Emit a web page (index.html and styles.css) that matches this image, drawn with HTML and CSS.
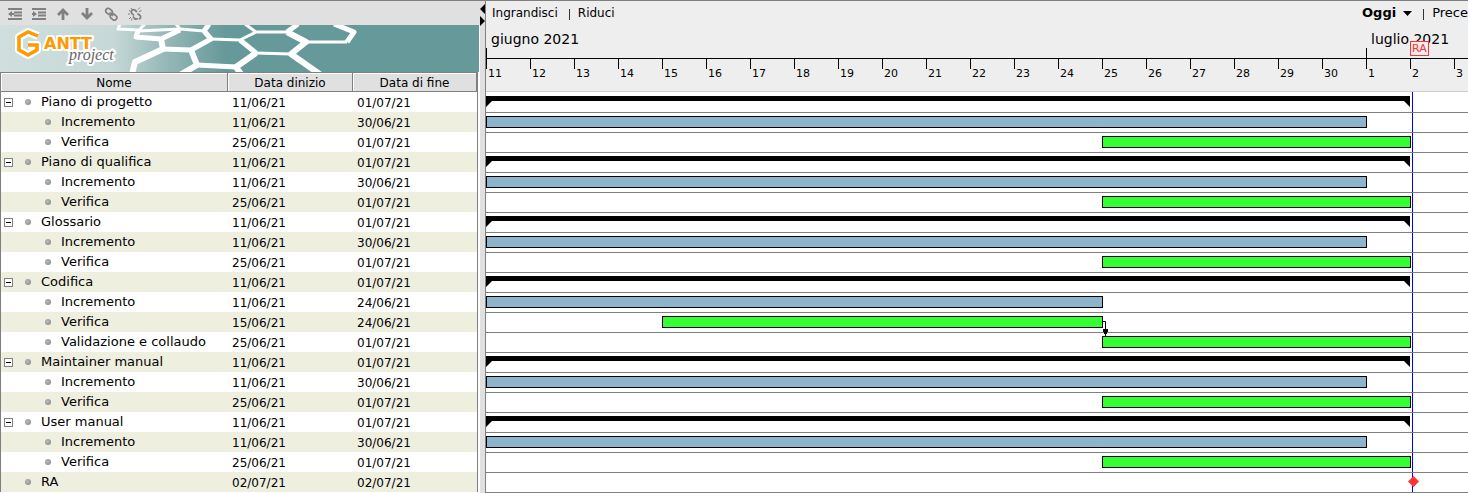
FILE: index.html
```html
<!DOCTYPE html>
<html lang="it">
<head>
<meta charset="utf-8">
<title>GanttProject</title>
<link rel="stylesheet" href="styles.css">
</head>
<body>
<div class="app">
  <section class="tasks">
    <div class="toolbar">
      <button class="tool" aria-label="Riduci rientro"><svg width="14" height="12" viewBox="0 0 14 12"><path d="M0 1h14M6 4.500h8M6 7.500h8M0 11h14" stroke="#808080" stroke-width="2"/><path d="M0 6l4-3v2h2v2H4v2z" fill="#808080"/></svg></button>
      <button class="tool" aria-label="Aumenta rientro"><svg width="14" height="12" viewBox="0 0 14 12"><path d="M0 1h14M6 4.500h8M6 7.500h8M0 11h14" stroke="#808080" stroke-width="2"/><path d="M5 6L1 3v2H0v2h1v2z" fill="#808080"/></svg></button>
      <button class="tool" aria-label="Sposta su"><svg width="14" height="12" viewBox="0 0 14 12"><path d="M7 12V2M2 7l5-5 5 5" fill="none" stroke="#808080" stroke-width="2.800"/></svg></button>
      <button class="tool" aria-label="Sposta giù"><svg width="14" height="12" viewBox="0 0 14 12"><path d="M7 0v10M2 5l5 5 5-5" fill="none" stroke="#808080" stroke-width="2.800"/></svg></button>
      <button class="tool" aria-label="Collega"><svg width="14" height="14" viewBox="0 0 14 14"><g fill="none" stroke="#808080" stroke-width="1.700"><rect x="1.500" y="2" width="7" height="5" rx="2.300" transform="rotate(40 5 4.500)"/><rect x="6" y="7.400" width="7" height="5" rx="2.300" transform="rotate(40 9.500 10)"/><path d="M5.500 5.500l3.500 3.500"/></g></svg></button>
      <button class="tool" aria-label="Scollega"><svg width="14" height="14" viewBox="0 0 14 14"><g fill="none" stroke="#808080" stroke-width="1.700"><path d="M6 8.500L3.800 6.400a2.300 2.300 0 0 1 3-3.400L9 5"/><path d="M5 9.500l1.500 2a2.400 2.400 0 0 0 3.500-.3"/><path d="M9.500 6.500l2.500 2a2 2 0 0 1-1 3.500"/></g><path d="M3 1l1 1.500M1 3.500l1.500.5M0 7h2M10 2.500L12 .5M11 4.500l2.500-.8M1 12l2-2M3.500 13.500l.6-2" stroke="#808080"/></svg></button>
    </div>
    <div class="banner">
      <svg class="banner-art" width="479" height="47" viewBox="0 0 479 47" role="img" aria-label="GanttProject">
        <defs><linearGradient id="sea" gradientUnits="userSpaceOnUse" x1="0" y1="0" x2="225" y2="0"><stop offset="0" stop-color="#d0dfdd"/><stop offset=".5" stop-color="#c6d8d7"/><stop offset=".75" stop-color="#93b7b6"/><stop offset="1" stop-color="#669999"/></linearGradient></defs>
        <rect width="479" height="47" fill="url(#sea)"/>
        <g fill="none" stroke="#fff" stroke-linejoin="round">
          <path stroke-width="3" d="M120-1l-2 5 20 1M138 6l42-2-4-5M180 4l24 2M211 14l29 1M256 7h31M306 17h41M256 28l35 1M240 15l16-8-11-8M145-1l-7 7"/>
          <path stroke-width="5" d="M138 6l-2 6 25 2 19-9M204 6l5-7M162 24l29 1 20-11-7-8M197 40l39 2M287 7l11-8M347 17l7-10-20-8M240 15l16 13"/>
          <path stroke-width="6" d="M161 14l2 10-28 13-3 12M191 25l6 15-17 10M287 7l19 10-15 12 30 21M256 28l-20 14 5 7"/>
        </g>
        <g stroke-linejoin="round">
          <path d="M38 11l-10-4-9 5v13l9 5 9-5v-5h-9" fill="none" stroke="#fff" stroke-width="8"/>
          <text class="logo-name" x="44" y="24">ANTT</text>
          <path d="M38 11l-10-4-9 5v13l9 5 9-5v-5h-9" fill="none" stroke="#f90" stroke-width="3.500" stroke-linejoin="miter"/>
          <text class="logo-sub" x="69" y="35">project</text>
        </g>
      </svg>
    </div>
    <table class="grid">
      <colgroup><col class="c-name"><col class="c-start"><col class="c-end"></colgroup>
      <thead><tr><th>Nome</th><th>Data dinizio</th><th>Data di fine</th></tr></thead>
      <tbody>
        <tr><td><div class="name"><button class="toggle" aria-label="Comprimi"></button>Piano di progetto</div></td><td>11/06/21</td><td>01/07/21</td></tr>
        <tr><td><div class="name sub">Incremento</div></td><td>11/06/21</td><td>30/06/21</td></tr>
        <tr><td><div class="name sub">Verifica</div></td><td>25/06/21</td><td>01/07/21</td></tr>
        <tr><td><div class="name"><button class="toggle" aria-label="Comprimi"></button>Piano di qualifica</div></td><td>11/06/21</td><td>01/07/21</td></tr>
        <tr><td><div class="name sub">Incremento</div></td><td>11/06/21</td><td>30/06/21</td></tr>
        <tr><td><div class="name sub">Verifica</div></td><td>25/06/21</td><td>01/07/21</td></tr>
        <tr><td><div class="name"><button class="toggle" aria-label="Comprimi"></button>Glossario</div></td><td>11/06/21</td><td>01/07/21</td></tr>
        <tr><td><div class="name sub">Incremento</div></td><td>11/06/21</td><td>30/06/21</td></tr>
        <tr><td><div class="name sub">Verifica</div></td><td>25/06/21</td><td>01/07/21</td></tr>
        <tr><td><div class="name"><button class="toggle" aria-label="Comprimi"></button>Codifica</div></td><td>11/06/21</td><td>01/07/21</td></tr>
        <tr><td><div class="name sub">Incremento</div></td><td>11/06/21</td><td>24/06/21</td></tr>
        <tr><td><div class="name sub">Verifica</div></td><td>15/06/21</td><td>24/06/21</td></tr>
        <tr><td><div class="name sub">Validazione e collaudo</div></td><td>25/06/21</td><td>01/07/21</td></tr>
        <tr><td><div class="name"><button class="toggle" aria-label="Comprimi"></button>Maintainer manual</div></td><td>11/06/21</td><td>01/07/21</td></tr>
        <tr><td><div class="name sub">Incremento</div></td><td>11/06/21</td><td>30/06/21</td></tr>
        <tr><td><div class="name sub">Verifica</div></td><td>25/06/21</td><td>01/07/21</td></tr>
        <tr><td><div class="name"><button class="toggle" aria-label="Comprimi"></button>User manual</div></td><td>11/06/21</td><td>01/07/21</td></tr>
        <tr><td><div class="name sub">Incremento</div></td><td>11/06/21</td><td>30/06/21</td></tr>
        <tr><td><div class="name sub">Verifica</div></td><td>25/06/21</td><td>01/07/21</td></tr>
        <tr><td><div class="name leaf">RA</div></td><td>02/07/21</td><td>02/07/21</td></tr>
      </tbody>
    </table>
  </section>
  <div class="splitter">
    <svg width="5" height="22" viewBox="0 0 5 22"><path d="M5 0v10L0 5zM0 12v10l5-5z"/></svg>
  </div>
  <section class="chart">
    <div class="chart-bar">
      <button class="link">Ingrandisci</button><span class="sep"></span><button class="link">Riduci</button>
      <div class="nav">
        <button class="link today">Oggi<svg width="9" height="5" viewBox="0 0 9 5"><path d="M0 0h9L4.500 5z"/></svg></button><span class="sep"></span><button class="link">Prece</button>
      </div>
    </div>
    <div class="scale">
      <div class="months"><span class="month june">giugno 2021</span><span class="month july">luglio 2021</span></div>
      <div class="days"><span>11</span><span>12</span><span>13</span><span>14</span><span>15</span><span>16</span><span>17</span><span>18</span><span>19</span><span>20</span><span>21</span><span>22</span><span>23</span><span>24</span><span>25</span><span>26</span><span>27</span><span>28</span><span>29</span><span>30</span><span>1</span><span>2</span><span>3</span></div>
      <span class="flag">RA</span>
    </div>
    <div class="rows">
      <div class="now"></div>
      <div class="row"><div class="group"></div></div>
      <div class="row"><div class="bar work" style="grid-column:1/21"></div></div>
      <div class="row"><div class="bar check" style="grid-column:15/22"></div></div>
      <div class="row"><div class="group"></div></div>
      <div class="row"><div class="bar work" style="grid-column:1/21"></div></div>
      <div class="row"><div class="bar check" style="grid-column:15/22"></div></div>
      <div class="row"><div class="group"></div></div>
      <div class="row"><div class="bar work" style="grid-column:1/21"></div></div>
      <div class="row"><div class="bar check" style="grid-column:15/22"></div></div>
      <div class="row"><div class="group"></div></div>
      <div class="row"><div class="bar work" style="grid-column:1/15"></div></div>
      <div class="row"><div class="bar check" style="grid-column:5/15"></div><svg class="arrow" width="7" height="15" viewBox="0 0 7 15"><path d="M0 .5h3.500V15" fill="none" stroke="#000"/><path d="M1 8h5v3H5v2H2v-2H1z"/></svg></div>
      <div class="row"><div class="bar check" style="grid-column:15/22"></div></div>
      <div class="row"><div class="group"></div></div>
      <div class="row"><div class="bar work" style="grid-column:1/21"></div></div>
      <div class="row"><div class="bar check" style="grid-column:15/22"></div></div>
      <div class="row"><div class="group"></div></div>
      <div class="row"><div class="bar work" style="grid-column:1/21"></div></div>
      <div class="row"><div class="bar check" style="grid-column:15/22"></div></div>
      <div class="row"><svg class="milestone" width="11" height="11" viewBox="0 0 11 11"><path d="M5.500 0L11 5.500 5.500 11 0 5.500z" fill="#f33"/></svg></div>
    </div>
  </section>
</div>
</body>
</html>
```
FILE: styles.css
```css
* { box-sizing: border-box; }

body {
  margin: 0;
  background: #fff;
  color: #000;
  font-family: "DejaVu Sans", sans-serif;
  font-size: 12px;
  overflow: hidden;
}

button {
  margin: 0;
  padding: 0;
  border: 0;
  background: none;
  color: inherit;
  font: inherit;
}

svg { display: block; flex: none; }

.app {
  --day: 44px;
  --line: #808080;
  display: grid;
  grid-template-columns: 480px 5px minmax(0, 1fr);
  min-height: 100vh;
}

/* Task list */
.toolbar {
  display: flex;
  align-items: center;
  height: 25px;
  padding: 2px 0 0 3px;
  border-top: 1px solid var(--line);
  background: #e0e0e0;
}

.tool {
  display: grid;
  place-items: center;
  width: 24px;
  height: 20px;
}

.banner {
  height: 47px;
  margin-right: 1px;
  background: #699;
  overflow: hidden;
}

.logo-name {
  font-size: 16px;
  font-weight: bold;
  fill: #f90;
  stroke: #fff;
  stroke-width: 4px;
  paint-order: stroke;
}

.logo-sub {
  font-family: "Liberation Serif", serif;
  font-size: 16px;
  font-style: italic;
  fill: #666;
  stroke: #fff;
  stroke-width: 4px;
  paint-order: stroke;
}

.grid {
  width: 478px;
  table-layout: fixed;
  border-collapse: separate;
  border-spacing: 0;
  border: solid var(--line);
  border-width: 1px 1px 0;
}

.c-name { width: 227px; }
.c-start { width: 125px; }

.grid th {
  height: 19px;
  padding: 2px 0 0;
  border: solid var(--line);
  border-width: 0 1px 1px 0;
  background: #e0e0e0;
  box-shadow: inset 1px 1px #fff;
  font-weight: normal;
  line-height: 16px;
}

.grid td {
  height: 20px;
  padding: 2px 0 0 4px;
  line-height: 18px;
}

.grid td:first-child { padding: 0; }
.grid tbody tr:nth-child(even) { background: #efefe0; }

.name {
  display: flex;
  align-items: center;
  height: 20px;
  padding-left: 3px;
  font-size: 13px;
  line-height: 20px;
}

.name::before {
  content: "";
  order: -1;
  width: 6px;
  height: 6px;
  margin: 0 10px 0 12px;
  border-radius: 50%;
  background: radial-gradient(circle at 40% 40%, #bbb, #808080);
}

.toggle {
  order: -2;
  width: 9px;
  height: 9px;
  border: 1px solid var(--line);
  background: linear-gradient(#000, #000) center / 5px 1px no-repeat #fff;
}

.name.sub { padding-left: 32px; }
.name.leaf { padding-left: 12px; }

/* Divider */
.splitter {
  padding-top: 3px;
  border-top: 1px solid var(--line);
  background: #e0e0e0;
}

/* Chart */
.chart {
  border: solid var(--line);
  border-width: 1px 0 0 1px;
  overflow: hidden;
}

.chart-bar {
  display: flex;
  align-items: center;
  height: 24px;
  padding-left: 6px;
  background: #eee;
}

.link { line-height: 24px; }

.sep {
  width: 1px;
  height: 11px;
  margin: 3px 8px 0 11px;
  background: #333;
}

.nav {
  display: flex;
  align-items: center;
  margin-left: auto;
  font-size: 13px;
}

.today {
  display: flex;
  align-items: center;
  gap: 7px;
  font-weight: bold;
}

.scale {
  position: relative;
  background: #eee;
}

.months, .days, .row {
  display: grid;
  grid-template-columns: repeat(23, var(--day));
}

.months {
  height: 34px;
  border-bottom: 1px solid #000;
}

.month {
  padding-left: 5px;
  background: linear-gradient(#000, #000) left bottom / 1px 10px no-repeat;
  font-size: 14px;
  line-height: 28px;
}

.june { grid-column: 1 / 21; }
.july { grid-column: 21 / 24; }

.days {
  height: 33px;
  border-bottom: 1px solid #ccc;
}

.days span {
  padding: 8px 0 0 2px;
  background: linear-gradient(#000, #000) left top / 1px 10px no-repeat;
  font-size: 11px;
  line-height: 14px;
}

.flag {
  position: absolute;
  top: 16px;
  left: calc(21 * var(--day));
  padding: 0 1px;
  border: 1px solid #f33;
  background: #eee;
  color: #f33;
  font-size: 11px;
  line-height: 13px;
}

.rows {
  position: relative;
  padding-top: 1px;
}

.now {
  position: absolute;
  top: 0;
  bottom: 0;
  left: calc(21 * var(--day) + 2px);
  width: 1px;
  background: #00f;
}

.row {
  position: relative;
  height: 20px;
  padding-top: 3px;
  border-bottom: 1px solid var(--line);
}

.group {
  grid-column: 1 / 22;
  height: 11px;
  background: #000;
  clip-path: polygon(0 0, 100% 0, 100% 100%, calc(100% - 6px) 5px, 6px 5px, 0 100%);
}

.bar {
  height: 12px;
  margin-right: -1px;
  border: 1px solid #000;
}

.work { background: #8cb4cd; }
.check { background: #3f3; }

.arrow {
  position: absolute;
  z-index: 1;
  top: 8px;
  left: calc(14 * var(--day));
}

.milestone {
  position: absolute;
  top: 3px;
  left: calc(21 * var(--day) - 2px);
}
```
